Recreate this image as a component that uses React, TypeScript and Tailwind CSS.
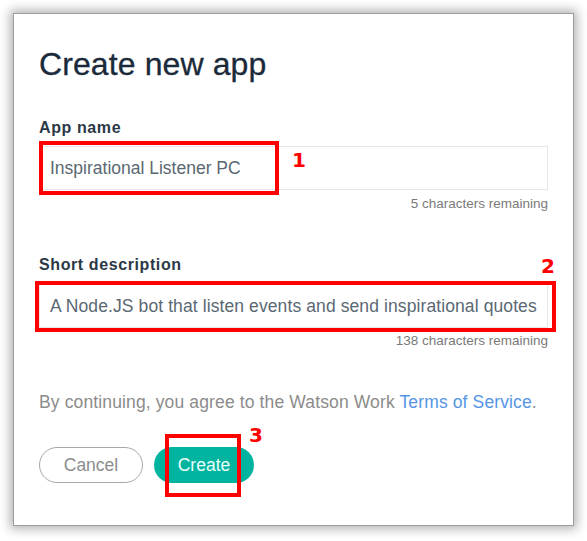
import React from "react";

export default function App() {
  return (
    <div className="w-[587px] h-[541px] bg-white pt-[13px] pl-[13px]" style={{ fontFamily: '"Liberation Sans", Arial, sans-serif' }}>
      <div className="relative w-[561px] h-[513px] bg-white border border-[#9c9c9c] shadow-[0_0_10px_3px_rgba(0,0,0,0.3)] pt-[34px] pl-[25px] pr-[25px]">
        <h1 className="text-[32px] leading-[32px] text-[#1a2a3a] tracking-[0.1px] [-webkit-text-stroke:0.3px_#1a2a3a]">Create new app</h1>

        <div className="mt-[38px] text-[16px] leading-[20px] font-bold text-[#2b3947] tracking-[0.6px]">App name</div>
        <div className="mt-[8px] h-[44px] border border-[#e6e6e6] flex items-center pl-[10px] text-[17.5px] text-[#5a6872] overflow-hidden whitespace-nowrap">
          Inspirational Listener PC
        </div>
        <div className="mt-[6px] text-right text-[13.5px] leading-[16px] text-[#7a7a7a]">5 characters remaining</div>

        <div className="mt-[43px] text-[16px] leading-[20px] font-bold text-[#2b3947] tracking-[0.6px]">Short description</div>
        <div className="mt-[9px] h-[44px] border border-[#e6e6e6] flex items-center pl-[10px] text-[17.5px] text-[#5a6872] overflow-hidden whitespace-nowrap tracking-[0.1px]">
          A Node.JS bot that listen events and send inspirational quotes
        </div>
        <div className="mt-[5px] text-right text-[13.5px] leading-[16px] text-[#7a7a7a]">138 characters remaining</div>

        <p className="mt-[41px] text-[17.5px] leading-[24px] text-[#8c8c8c] tracking-[0.13px]">
          By continuing, you agree to the Watson Work <span className="text-[#5596e6]">Terms of Service</span>.
        </p>

        <div className="mt-[33px] flex gap-[11px]">
          <button className="w-[104px] h-[36px] rounded-full border border-[#a8a8a8] text-[17.5px] text-[#8c8c8c] bg-white">Cancel</button>
          <button className="w-[100px] h-[36px] rounded-full bg-[#00b4a0] text-[17.5px] text-[#eafffb]">Create</button>
        </div>

        {/* annotations overlaid on the screenshot */}
        <div className="absolute left-[25px] top-[127px] w-[240px] h-[54px] border-[4px] border-[#ff0000]" />
        <div className="absolute left-[278px] top-[136px] text-[20px] leading-[20px] font-bold text-[#ff0000]" style={{ fontFamily: '"DejaVu Sans", sans-serif' }}>1</div>

        <div className="absolute left-[21px] top-[267px] w-[521px] h-[51px] border-[4px] border-[#ff0000]" />
        <div className="absolute left-[527px] top-[242px] text-[20px] leading-[20px] font-bold text-[#ff0000]" style={{ fontFamily: '"DejaVu Sans", sans-serif' }}>2</div>

        <div className="absolute left-[151px] top-[420px] w-[76px] h-[63px] border-[4px] border-[#ff0000]" />
        <div className="absolute left-[235px] top-[411px] text-[20px] leading-[20px] font-bold text-[#ff0000]" style={{ fontFamily: '"DejaVu Sans", sans-serif' }}>3</div>
      </div>
    </div>
  );
}
